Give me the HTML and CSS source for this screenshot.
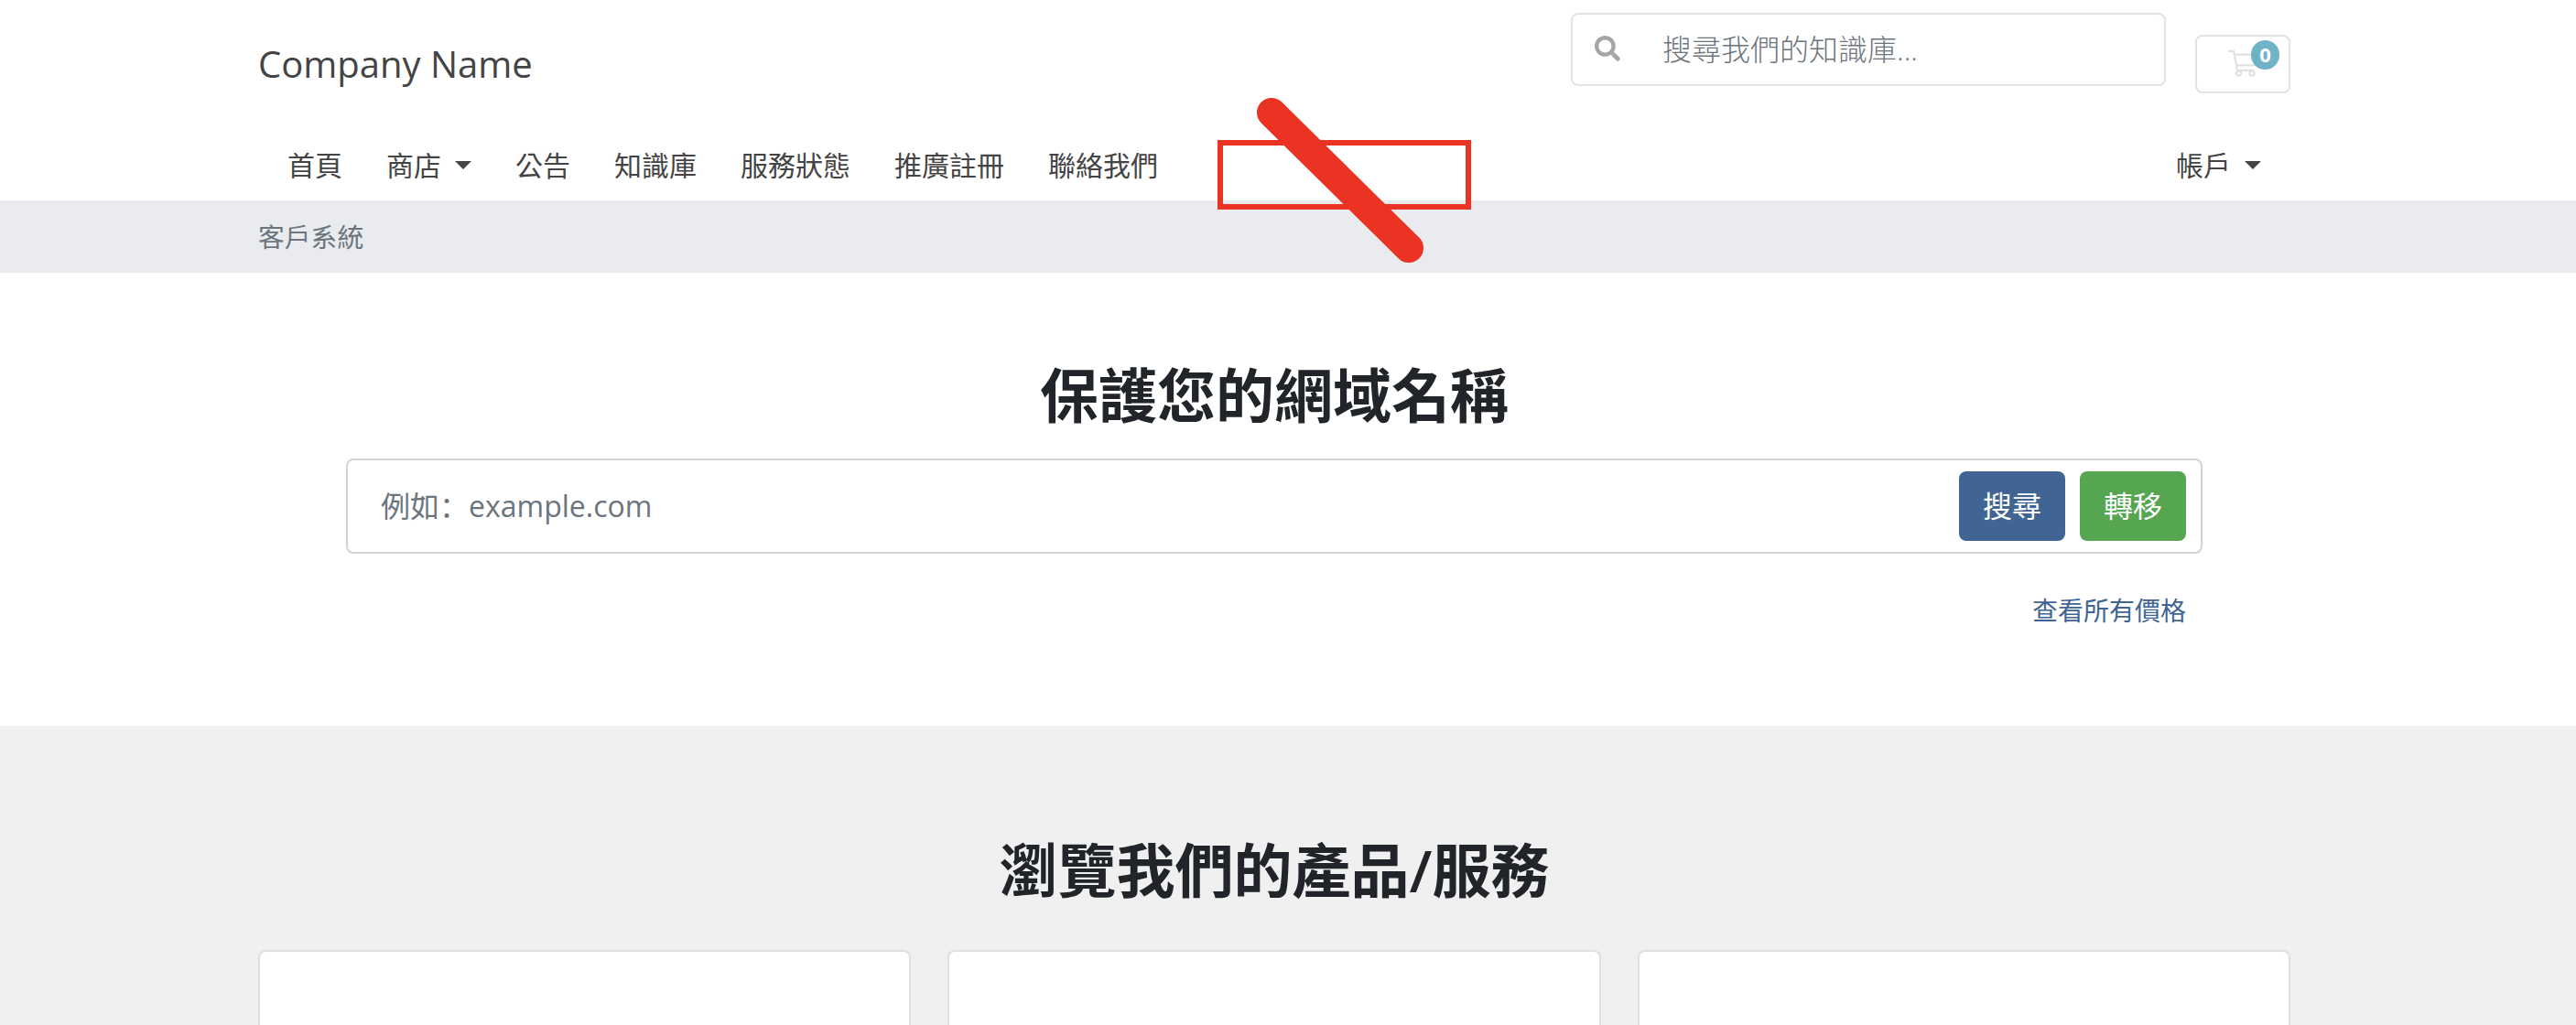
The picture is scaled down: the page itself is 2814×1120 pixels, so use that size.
FILE: index.html
```html
<!DOCTYPE html>
<html lang="zh-Hant">
<head>
<meta charset="utf-8">
<title>客戶系統</title>
<link rel="stylesheet" href="styles.css">
</head>
<body>
<header class="header">
  <div class="container topbar">
    <a class="brand">Company Name</a>
    <div class="tools">
      <div class="kb-search">
        <svg class="search-icon" viewBox="0 0 512 512"><path fill="currentColor" d="M505 442.700L405.300 343c-4.500-4.500-10.600-7-17-7H372c27.600-35.300 44-79.700 44-128C416 93.100 322.900 0 208 0S0 93.100 0 208s93.100 208 208 208c48.300 0 92.700-16.400 128-44v16.300c0 6.400 2.500 12.500 7 17l99.700 99.700c9.400 9.400 24.600 9.400 33.900 0l28.300-28.300c9.400-9.400 9.400-24.600.1-34zM208 336c-70.700 0-128-57.200-128-128 0-70.700 57.200-128 128-128 70.700 0 128 57.200 128 128 0 70.700-57.200 128-128 128z"/></svg>
        <span class="kb-placeholder">搜尋我們的知識庫...</span>
      </div>
      <a class="cart">
        <svg class="cart-icon" viewBox="0 0 36 32"><g fill="none" stroke="currentColor" stroke-width="2.200" stroke-linecap="round" stroke-linejoin="round"><path d="M2 1.800h5l4 21h17M8 5.600h24.500L30 17.400H10"/><circle cx="12.500" cy="26" r="2.600"/><circle cx="27" cy="26" r="2.600"/></g></svg>
        <span class="badge">0</span>
      </a>
    </div>
  </div>
  <nav class="container nav">
    <a>首頁</a>
    <a class="dropdown">商店</a>
    <a>公告</a>
    <a>知識庫</a>
    <a>服務狀態</a>
    <a>推廣註冊</a>
    <a>聯絡我們</a>
    <a class="dropdown account">帳戶</a>
  </nav>
</header>
<div class="breadcrumb"><div class="container">客戶系統</div></div>
<main>
  <section class="domain">
    <h2>保護您的網域名稱</h2>
    <div class="domain-box">
      <span class="domain-placeholder">例如<span lang="zh-Hans" class="colon">：</span>example.com</span>
      <a class="btn btn-search">搜尋</a>
      <a class="btn btn-transfer">轉移</a>
    </div>
    <a class="pricing">查看所有價格</a>
  </section>
  <section class="products">
    <h2>瀏覽我們的產品/服務</h2>
    <div class="container cards">
      <div class="card"></div>
      <div class="card"></div>
      <div class="card"></div>
    </div>
  </section>
</main>
<svg class="annotation" viewBox="0 0 280 184"><g fill="none" stroke="#ea3323"><rect x="4" y="50" width="271" height="70" stroke-width="6"/><path d="M60 17L210 165" stroke-width="32" stroke-linecap="round"/></g></svg>
</body>
</html>
```
FILE: styles.css
```css
* { box-sizing: border-box; }
body {
  margin: 0;
  width: 2814px;
  height: 1120px;
  overflow: hidden;
  position: relative;
  display: flex;
  flex-direction: column;
  background: #fff;
  color: #212529;
  font-family: "Open Sans", "Noto Sans CJK TC", sans-serif;
  font-size: 32px;
}
.container { width: 2220px; margin-left: 282px; }
.header { height: 219px; flex: none; }
.topbar {
  height: 144px;
  display: flex;
  justify-content: space-between;
}
.brand { font-size: 40px; line-height: 60px; padding-top: 40px; color: #444; }
.tools { display: flex; gap: 32px; }
.kb-search {
  margin-top: 14px;
  width: 650px;
  height: 80px;
  border: 2px solid #e3e3e3;
  border-radius: 8px;
  display: flex;
  align-items: center;
  padding-left: 24px;
}
.search-icon { width: 28px; height: 28px; color: #a5a5a5; margin-top: -2px; }
.kb-placeholder { margin-left: 46px; font-weight: 300; line-height: 48px; color: #6c757d; }
.cart {
  position: relative;
  margin-top: 38px;
  width: 104px;
  height: 64px;
  border: 2px solid #e3e3e3;
  border-radius: 8px;
  padding: 14px 0 0 33px;
}
.cart-icon { display: block; width: 36px; height: 32px; color: #e1e1e1; }
.badge {
  position: absolute;
  top: 4px;
  right: 10px;
  width: 31px;
  height: 32px;
  border-radius: 16px;
  background: rgba(91, 168, 189, .87);
  color: #fff;
  font-size: 22px;
  font-weight: 700;
  line-height: 31px;
  text-align: center;
}
.nav {
  height: 74px;
  display: flex;
  align-items: center;
  gap: 48px;
  padding: 0 32px;
  font-size: 30px;
  line-height: 46px;
  color: #444;
}
.nav .account { margin-left: auto; }
.dropdown { display: flex; align-items: center; gap: 15px; }
.dropdown::after {
  content: "";
  border: 9px solid transparent;
  border-top-color: currentColor;
  border-bottom: 0;
  margin-top: -2px;
}
.breadcrumb {
  height: 79px;
  flex: none;
  background: #e9ebef;
  color: #6c757d;
  font-size: 28.8px;
  line-height: 80px;
}
h2 { margin: 0; font-size: 64px; line-height: 76px; font-weight: 600; text-align: center; }
.domain {
  width: 2028px;
  height: 495px;
  margin-left: 378px;
  padding-top: 96px;
  display: flex;
  flex-direction: column;
}
.domain-box {
  margin-top: 31px;
  height: 104px;
  border: 2px solid #ced4da;
  border-radius: 8px;
  display: flex;
  align-items: center;
  gap: 16px;
  padding: 0 16px 0 36px;
}
.domain-placeholder { flex: 1; color: #6c757d; line-height: 48px; padding-bottom: 2px; }
.colon { font-family: "Noto Sans CJK JP", sans-serif; }
.btn {
  width: 116px;
  height: 76px;
  line-height: 76px;
  border-radius: 8px;
  color: #fff;
  text-align: center;
}
.btn-search { background: #406595; }
.btn-transfer { background: #55a551; }
.pricing {
  align-self: flex-end;
  margin: 40px 18px 0 0;
  font-size: 28px;
  line-height: 44px;
  color: #406595;
}
.products { height: 327px; background: #f0f0f0; padding-top: 120px; }
.products h2 { width: 2784px; }
.cards { display: grid; grid-template-columns: repeat(3, 1fr); gap: 40px; margin-top: 49px; }
.card {
  height: 100px;
  background: #fff;
  border: 2px solid #dfdfdf;
  border-bottom: 0;
  border-radius: 8px 8px 0 0;
}
.annotation { position: absolute; left: 1329px; top: 106px; width: 280px; height: 184px; }
```
